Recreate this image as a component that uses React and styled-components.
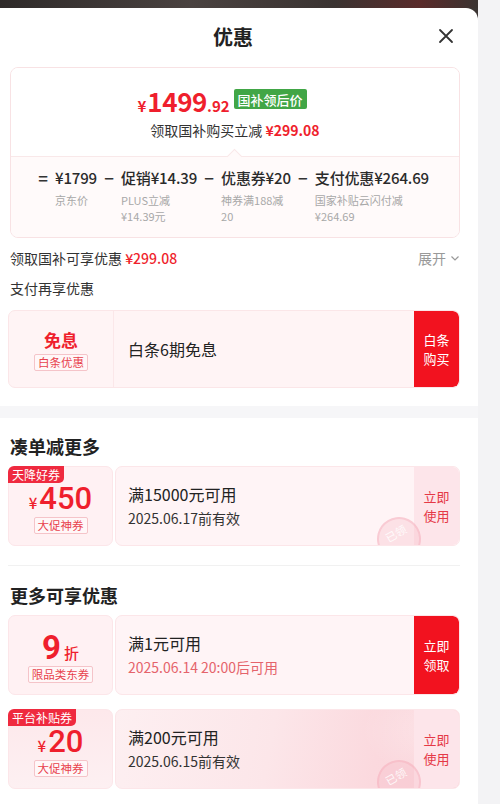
import React from "react";
import styled, { createGlobalStyle } from "styled-components";

const GlobalStyle = createGlobalStyle`
    body {
        margin: 0;
        background: #f3f3f5;
        font-family: "Noto Sans CJK SC", "Noto Sans", sans-serif;
        color: #222;
    }
    * { box-sizing: border-box; }
`;

const RED = "#ef1f2d";

export default function App() {
    return (
        <Page>
            <GlobalStyle />
            <Column>
                <PhotoStrip />
                <Sheet>
                    <Header>
                        <Title>优惠</Title>
                        <Close aria-label="close">
                            <svg width="16" height="16" viewBox="0 0 16 16">
                                <path d="M2 2 L14 14 M14 2 L2 14" stroke="#333" strokeWidth="1.8" strokeLinecap="round" />
                            </svg>
                        </Close>
                    </Header>

                    <Body>
                        <PriceCard>
                            <PriceTop>
                                <PriceLine>
                                    <Yen>¥</Yen>
                                    <Big>1499</Big>
                                    <Cents>.92</Cents>
                                    <GreenBadge>国补领后价</GreenBadge>
                                </PriceLine>
                                <SubLine>
                                    领取国补购买立减 <RedText $bold>¥299.08</RedText>
                                </SubLine>
                            </PriceTop>
                            <PriceBottom>
                                <Formula>
                                    <Op>=</Op>
                                    <Term>
                                        <TermValue>¥1799</TermValue>
                                        <TermLabel>京东价</TermLabel>
                                    </Term>
                                    <Op>−</Op>
                                    <Term>
                                        <TermValue>促销¥14.39</TermValue>
                                        <TermLabel>PLUS立减<br />¥14.39元</TermLabel>
                                    </Term>
                                    <Op>−</Op>
                                    <Term>
                                        <TermValue>优惠券¥20</TermValue>
                                        <TermLabel>神券满188减<br />20</TermLabel>
                                    </Term>
                                    <Op>−</Op>
                                    <Term>
                                        <TermValue>支付优惠¥264.69</TermValue>
                                        <TermLabel>国家补贴云闪付减<br />¥264.69</TermLabel>
                                    </Term>
                                </Formula>
                            </PriceBottom>
                        </PriceCard>

                        <InfoRow>
                            <span>领取国补可享优惠 <RedText>¥299.08</RedText></span>
                            <Expand>
                                展开
                                <svg width="10" height="10" viewBox="0 0 10 10">
                                    <path d="M1.5 3.5 L5 7 L8.5 3.5" fill="none" stroke="#999" strokeWidth="1.2" />
                                </svg>
                            </Expand>
                        </InfoRow>
                        <InfoRow $gap={10}>支付再享优惠</InfoRow>

                        <BaitiaoCard>
                            <BaitiaoLeft>
                                <BaitiaoTitle>免息</BaitiaoTitle>
                                <OutlineTag>白条优惠</OutlineTag>
                            </BaitiaoLeft>
                            <BaitiaoText>白条6期免息</BaitiaoText>
                            <RedButton>白条<br />购买</RedButton>
                        </BaitiaoCard>
                    </Body>

                    <GrayBand />

                    <Body>
                        <SectionHeading $top={16}>凑单减更多</SectionHeading>
                        <Coupon
                            ribbon="天降好券"
                            amount={<><CouponYen>¥</CouponYen><CouponBig>450</CouponBig></>}
                            tag="大促神券"
                            title="满15000元可用"
                            date="2025.06.17前有效"
                            action={<>立即<br />使用</>}
                            stamp
                        />
                        <Divider />
                        <SectionHeading $top={17}>更多可享优惠</SectionHeading>
                        <Coupon
                            amount={<><CouponBig $bold>9</CouponBig><CouponUnit>折</CouponUnit></>}
                            tag="限品类东券"
                            title="满1元可用"
                            date="2025.06.14 20:00后可用"
                            redDate
                            action={<>立即<br />领取</>}
                            solid
                        />
                        <Spacer $h={14} />
                        <Coupon
                            ribbon="平台补贴券"
                            amount={<><CouponYen>¥</CouponYen><CouponBig>20</CouponBig></>}
                            tag="大促神券"
                            title="满200元可用"
                            date="2025.06.15前有效"
                            action={<>立即<br />使用</>}
                            stamp
                            fancy
                        />
                    </Body>
                </Sheet>
            </Column>
            <SideStrip />
        </Page>
    );
}

function Coupon({ ribbon, amount, tag, title, date, redDate, action, solid, stamp, fancy }) {
    return (
        <CouponRow>
            <CouponLeft $fancy={fancy}>
                {ribbon && <Ribbon>{ribbon}</Ribbon>}
                <AmountLine>{amount}</AmountLine>
                <OutlineTag>{tag}</OutlineTag>
            </CouponLeft>
            <CouponRight $fancy={fancy}>
                <CouponInfo>
                    <CouponTitle>{title}</CouponTitle>
                    <CouponDate $red={redDate}>{date}</CouponDate>
                </CouponInfo>
                {stamp && <Stamp>已领</Stamp>}
                {solid ? <RedButton>{action}</RedButton> : <SoftButton>{action}</SoftButton>}
            </CouponRight>
        </CouponRow>
    );
}

// styled components

const Page = styled.div`
    display: flex;
    width: 500px;
    height: 804px;
    overflow: hidden;
    background: #f3f3f5;
`;

const Column = styled.div`
    width: 478px;
    display: flex;
    flex-direction: column;
    background: #3b3533;
`;

const PhotoStrip = styled.div`
    height: 8px;
    background: linear-gradient(90deg, #2e2a29 0%, #4a4240 40%, #3a3331 70%, #5a2a2a 88%, #3a3331 100%);
`;

const SideStrip = styled.div`
    flex: 1;
    background: #f3f3f5;
`;

const Sheet = styled.div`
    flex: 1;
    background: #fff;
    border-top-right-radius: 12px;
`;

const Header = styled.div`
    position: relative;
    height: 56px;
    display: flex;
    align-items: center;
    justify-content: center;
    padding-right: 12px;
`;

const Title = styled.h1`
    margin: 0;
    font-size: 20px;
    font-weight: 700;
    color: #222;
`;

const Close = styled.div`
    position: absolute;
    right: 24px;
    top: 20px;
    width: 16px;
    height: 16px;
    display: flex;
`;

const Body = styled.div`
    padding: 0 18px 0 8px;
    display: flex;
    flex-direction: column;
`;

const PriceCard = styled.div`
    margin: 3px 0 0 2px;
    border: 1px solid #f8e2e4;
    border-radius: 8px;
    overflow: hidden;
`;

const PriceTop = styled.div`
    height: 88px;
    padding-top: 18px;
    display: flex;
    flex-direction: column;
    align-items: center;
    background: #fff;
`;

const PriceLine = styled.div`
    display: flex;
    align-items: baseline;
    height: 30px;
    color: ${RED};
    font-weight: 700;
    transform: translateX(-13px);
`;

const Yen = styled.span`
    font-size: 15px;
    margin-right: 1px;
`;

const Big = styled.span`
    font-size: 26px;
    line-height: 30px;
    letter-spacing: -0.4px;
`;

const Cents = styled.span`
    font-size: 15px;
`;

const GreenBadge = styled.span`
    align-self: center;
    margin-left: 4px;
    height: 20px;
    padding: 0 4px;
    display: flex;
    align-items: center;
    background: #41a646;
    color: #fff;
    font-size: 13px;
    font-weight: 500;
    border-radius: 2px;
    transform: translateY(-2px);
`;

const SubLine = styled.div`
    margin-top: 4px;
    font-size: 14px;
    line-height: 20px;
    color: #333;
`;

const RedText = styled.span`
    color: ${RED};
    font-weight: ${(p) => (p.$bold ? 600 : 500)};
`;

const PriceBottom = styled.div`
    position: relative;
    height: 81px;
    padding: 10px 0 0 26px;
    background: #fffafa;
    border-top: 1px solid #f9e8e9;

    &::before {
        content: "";
        position: absolute;
        left: 218px;
        top: -6px;
        width: 10px;
        height: 10px;
        background: #fffafa;
        border-top: 1px solid #f9e8e9;
        border-left: 1px solid #f9e8e9;
        transform: rotate(45deg);
    }
`;

const Formula = styled.div`
    display: flex;
    align-items: flex-start;
    gap: 6px;
`;

const Op = styled.span`
    width: 12px;
    text-align: center;
    font-size: 17px;
    line-height: 22px;
    color: #333;
    font-weight: 500;
`;

const Term = styled.div`
    display: flex;
    flex-direction: column;
`;

const TermValue = styled.span`
    font-size: 15px;
    line-height: 22px;
    font-weight: 500;
    color: #2a2a2a;
    white-space: nowrap;
    letter-spacing: -0.15px;
`;

const TermLabel = styled.span`
    margin-top: 3px;
    font-size: 11px;
    line-height: 16px;
    color: #a8a8a8;
    white-space: nowrap;
`;

const InfoRow = styled.div`
    margin-top: ${(p) => p.$gap ?? 10}px;
    margin-left: 2px;
    height: 20px;
    display: flex;
    align-items: center;
    justify-content: space-between;
    font-size: 14px;
    color: #333;
`;

const Expand = styled.span`
    display: flex;
    align-items: center;
    gap: 4px;
    color: #999;
    font-size: 14px;
`;

const BaitiaoCard = styled.div`
    margin-top: 12px;
    height: 78px;
    display: flex;
    align-items: stretch;
    background: #fff4f5;
    border: 1px solid #fbe6e8;
    border-radius: 7px;
    overflow: hidden;
`;

const BaitiaoLeft = styled.div`
    width: 105px;
    display: flex;
    flex-direction: column;
    align-items: center;
    justify-content: center;
    gap: 2px;
    border-right: 1px solid #fbe7e9;
`;

const BaitiaoTitle = styled.span`
    font-size: 17px;
    line-height: 24px;
    font-weight: 700;
    color: ${RED};
`;

const BaitiaoText = styled.div`
    flex: 1;
    display: flex;
    align-items: center;
    padding-left: 14px;
    font-size: 16px;
    color: #222;
`;

const OutlineTag = styled.span`
    height: 17px;
    padding: 0 3px;
    display: flex;
    align-items: center;
    font-size: 11.5px;
    line-height: 15px;
    color: #e8414c;
    background: #fff7f8;
    border: 1px solid #f5c4c9;
    border-radius: 2px;
`;

const RedButton = styled.div`
    width: 45px;
    display: flex;
    align-items: center;
    justify-content: center;
    text-align: center;
    background: #f2121f;
    color: #fff;
    font-size: 13px;
    line-height: 19px;
    border-radius: 0 6px 6px 0;
`;

const SoftButton = styled(RedButton)`
    background: #fde5ea;
    color: #e53846;
`;

const GrayBand = styled.div`
    margin-top: 18px;
    height: 12px;
    background: #f6f6f8;
`;

const SectionHeading = styled.h2`
    margin: ${(p) => p.$top}px 0 0 2px;
    font-size: 18px;
    line-height: 24px;
    font-weight: 700;
    color: #222;
`;

const CouponRow = styled.div`
    margin-top: 8px;
    height: 80px;
    display: flex;
    gap: 2px;
`;

const CouponLeft = styled.div`
    position: relative;
    width: 105px;
    display: flex;
    flex-direction: column;
    align-items: center;
    justify-content: center;
    gap: 3px;
    padding-top: 6px;
    background: ${(p) => (p.$fancy ? "linear-gradient(180deg, #fde8eb, #fdf0f2)" : "#fff1f3")};
    border: 1px solid #fce6e9;
    border-radius: 7px;
`;

const Ribbon = styled.span`
    position: absolute;
    left: -1px;
    top: -1px;
    height: 17px;
    padding: 0 4px;
    display: flex;
    align-items: center;
    background: #ef2a3f;
    color: #fff;
    font-size: 12px;
    line-height: 17px;
    border-radius: 6px 0 5px 0;
`;

const AmountLine = styled.div`
    display: flex;
    align-items: baseline;
    height: 30px;
    color: ${RED};
    font-weight: 500;
`;

const CouponYen = styled.span`
    font-size: 15px;
    line-height: 30px;
    margin-right: 2px;
`;

const CouponBig = styled.span`
    font-family: Roboto, "Noto Sans", sans-serif;
    font-size: ${(p) => (p.$bold ? 33 : 31)}px;
    line-height: 30px;
    font-weight: ${(p) => (p.$bold ? 700 : 500)};
`;

const CouponUnit = styled.span`
    font-size: 15px;
    line-height: 30px;
    margin-left: 3px;
`;

const CouponRight = styled.div`
    position: relative;
    flex: 1;
    display: flex;
    overflow: hidden;
    background: ${(p) =>
        p.$fancy
            ? "radial-gradient(ellipse 120px 70px at 330px 20px, rgba(255,255,255,0.35), rgba(255,255,255,0) 70%), linear-gradient(100deg, #fdeff1 0%, #fce6e9 45%, #fbd9de 75%, #fad4da 100%)"
            : "#fff4f6"};
    border: 1px solid #fce6e9;
    border-radius: 7px;
`;

const CouponInfo = styled.div`
    flex: 1;
    display: flex;
    flex-direction: column;
    justify-content: center;
    gap: 3px;
    padding-left: 12px;
    padding-bottom: 2px;
`;

const CouponTitle = styled.span`
    font-size: 16px;
    line-height: 22px;
    color: #222;
`;

const CouponDate = styled.span`
    font-size: 14px;
    line-height: 20px;
    color: ${(p) => (p.$red ? "#e5636b" : "#333")};
`;

const Stamp = styled.span`
    position: absolute;
    right: 38px;
    bottom: -16px;
    width: 44px;
    height: 44px;
    display: flex;
    align-items: flex-start;
    justify-content: center;
    padding-top: 6px;
    border-radius: 50%;
    border: 2px solid rgba(244, 170, 182, 0.4);
    background: rgba(247, 190, 200, 0.35);
    color: rgba(255, 255, 255, 0.85);
    font-size: 11px;
    line-height: 14px;
    transform: rotate(-30deg);
`;

const Divider = styled.div`
    margin-top: 19px;
    height: 1px;
    background: #f1f1f1;
`;

const Spacer = styled.div`
    height: ${(p) => p.$h - 8}px;
`;
